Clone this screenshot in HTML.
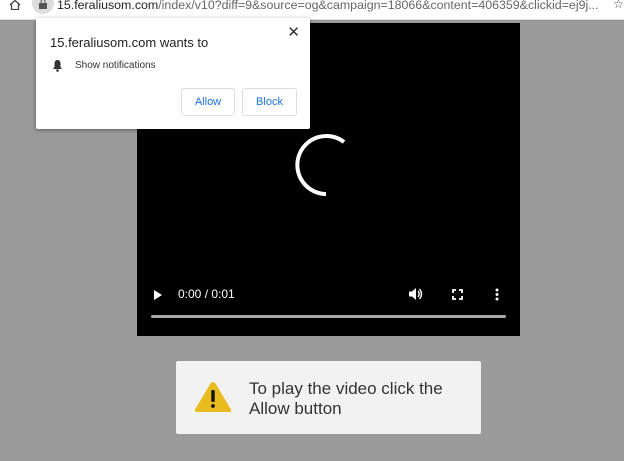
<!DOCTYPE html>
<html><head><style>
body{margin:0;width:624px;height:461px;background:#9a9a9a;font-family:"Liberation Sans",sans-serif;position:relative;overflow:hidden}
.bar{position:absolute;left:0;top:0;width:624px;height:19px;background:#fff;border-bottom:1px solid #ddd}
.url{position:absolute;left:57px;top:-2px;font-size:12.4px;color:#666;white-space:nowrap}
.url b{font-weight:normal;color:#222}
.pill{position:absolute;left:32px;top:-8px;width:22px;height:22px;border-radius:11px;background:#ddd}
.video{position:absolute;left:137px;top:23px;width:383px;height:313px;background:#000}
.pop{position:absolute;left:36px;top:18px;width:274px;height:111px;background:#fff;box-shadow:0 1px 4px rgba(0,0,0,.4);border-radius:2px}
.btn{position:absolute;top:70px;height:26px;border:1px solid #ddd;border-radius:3px;color:#1a73e8;font-size:11px;line-height:26px;text-align:center}
.msg{position:absolute;left:176px;top:361px;width:305px;height:73px;background:#f2f2f2;border-radius:2px}
</style></head><body>
<div class="bar">
<svg style="position:absolute;left:9px;top:0" width="12" height="10" viewBox="0 0 12 10"><path d="M1 5L6 0.5L11 5M2.5 4V9.5H9.5V4" fill="none" stroke="#444" stroke-width="1.3"/></svg>
<div class="pill"></div>
<svg style="position:absolute;left:38px;top:0" width="10" height="9"><rect x="1" y="3" width="8" height="6" fill="#555"/><path d="M3 3V1.5a2 2 0 0 1 4 0V3" stroke="#555" fill="none"/></svg>
<div class="url"><b>15.feraliusom.com</b>/index/v10?diff=9&amp;source=og&amp;campaign=18066&amp;content=406359&amp;clickid=ej9j...</div>
<div style="position:absolute;left:613px;top:-3px;font-size:12px;color:#555;background:#fff;width:11px">☆</div>
</div>
<div class="video">
<svg style="position:absolute;left:147px;top:102px" width="80" height="80" viewBox="0 0 80 80"><path d="M60 17A29 29 0 1 0 42 69" fill="none" stroke="#fff" stroke-width="4"/></svg>
<svg style="position:absolute;left:16px;top:266px" width="10" height="12"><path d="M1 1L9 6L1 11Z" fill="#fff"/></svg>
<div style="position:absolute;left:41px;top:264px;color:#fff;font-size:12px">0:00 / 0:01</div>
<svg style="position:absolute;left:271px;top:264px" width="16" height="14"><path d="M1 4.5H4L8 1V13L4 9.5H1Z" fill="#fff"/><path d="M10 4Q12.5 7 10 10M11.5 2Q15.5 7 11.5 12" stroke="#fff" fill="none" stroke-width="1.4"/></svg>
<svg style="position:absolute;left:315px;top:266px" width="11" height="11"><path d="M1 4V1H4M7 1H10V4M10 7V10H7M4 10H1V7" stroke="#fff" fill="none" stroke-width="1.8"/></svg>
<svg style="position:absolute;left:358px;top:265px" width="4" height="13"><circle cx="2" cy="2" r="1.5" fill="#fff"/><circle cx="2" cy="6.5" r="1.5" fill="#fff"/><circle cx="2" cy="11" r="1.5" fill="#fff"/></svg>
<div style="position:absolute;left:14px;top:292px;width:355px;height:3px;background:#a8a8a8;border-radius:2px"></div>
</div>
<div class="pop">
<div style="position:absolute;left:14px;top:17px;font-size:13px;color:#222">15.feraliusom.com wants to</div>
<div style="position:absolute;right:10px;top:5px;font-size:15px;color:#333">✕</div>
<svg style="position:absolute;left:16px;top:41px" width="11" height="13"><path d="M5.5 1C3 1 2.5 3 2.5 5V8L1 10H10L8.5 8V5C8.5 3 8 1 5.5 1Z" fill="#333"/><circle cx="5.5" cy="11.5" r="1.3" fill="#333"/></svg>
<div style="position:absolute;left:39px;top:42px;font-size:10px;color:#333">Show notifications</div>
<div class="btn" style="left:145px;width:52px">Allow</div>
<div class="btn" style="left:206px;width:53px">Block</div>
</div>
<div class="msg">
<svg style="position:absolute;left:17px;top:19px" width="40" height="34" viewBox="0 0 40 34"><path d="M20 2Q21.5 2 22.5 3.5L38 29.5Q39 32 36 32H4Q1 32 2 29.5L17.5 3.5Q18.5 2 20 2Z" fill="#e8bb1e"/><rect x="18.3" y="10" width="3.4" height="12" rx="1" fill="#111"/><circle cx="20" cy="26" r="1.9" fill="#111"/></svg>
<div style="position:absolute;left:73px;top:18px;font-size:17px;line-height:19.5px;color:#333">To play the video click the<br>Allow button</div>
</div>
</body></html>
